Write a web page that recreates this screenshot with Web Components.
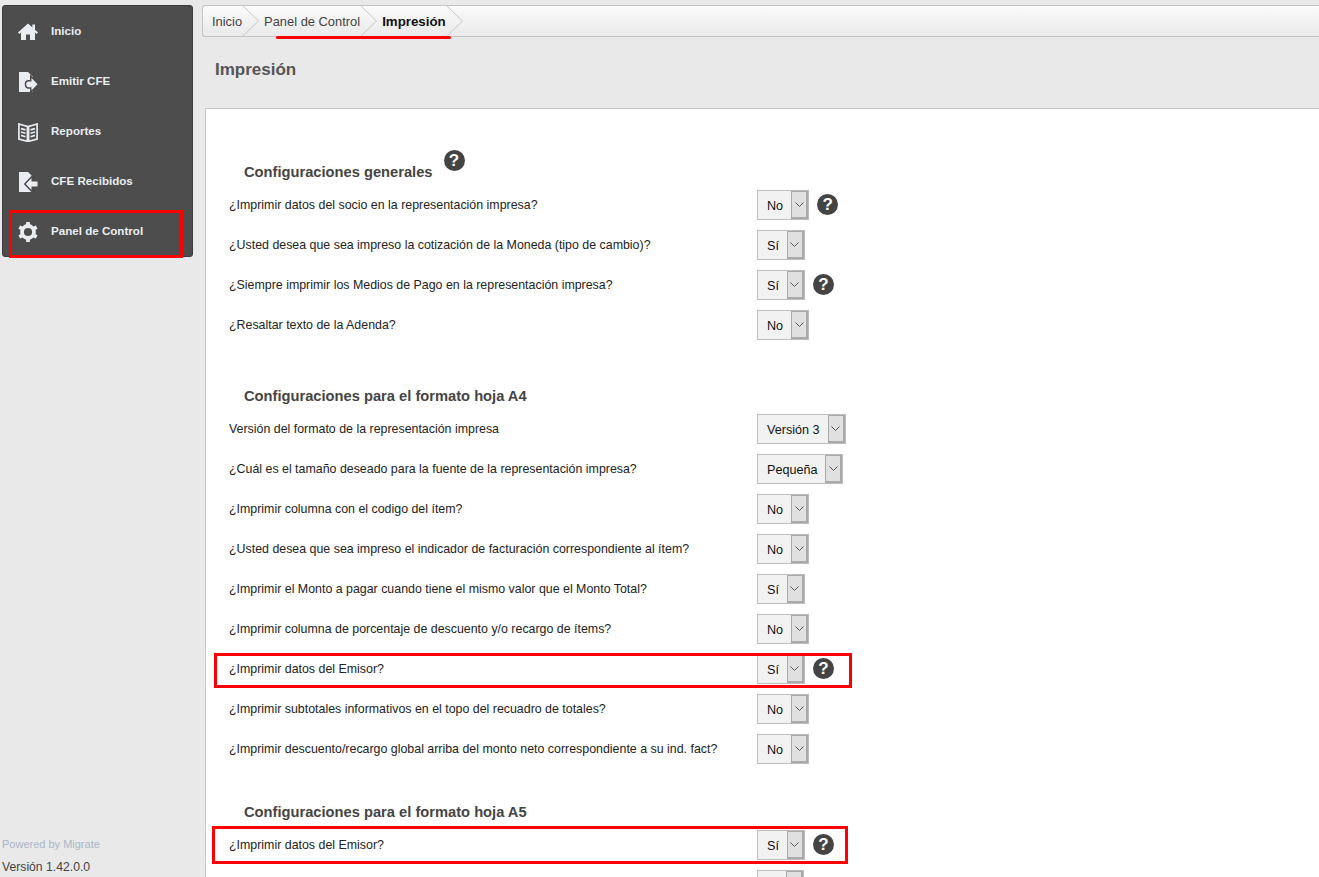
<!DOCTYPE html>
<html lang="es">
<head>
<meta charset="utf-8">
<title>Impresión</title>
<style>
  html, body { margin: 0; height: 100%; overflow: hidden; background: #e9e9e9; }
  body { font-family: "Liberation Sans", Arial, sans-serif; }
</style>
</head>
<body>
<app-shell>
  <side-nav slot="nav">
    <nav-item icon="home">Inicio</nav-item>
    <nav-item icon="send">Emitir CFE</nav-item>
    <nav-item icon="book">Reportes</nav-item>
    <nav-item icon="receive">CFE Recibidos</nav-item>
    <nav-item icon="gear" marked>Panel de Control</nav-item>
  </side-nav>
  <bread-crumbs slot="crumbs">
    <crumb-item>Inicio</crumb-item>
    <crumb-item>Panel de Control</crumb-item>
    <crumb-item current>Impresión</crumb-item>
  </bread-crumbs>

  <print-section heading="Configuraciones generales" help style="--top: 51px">
    <print-row label="¿Imprimir datos del socio en la representación impresa?" value="No" help></print-row>
    <print-row label="¿Usted desea que sea impreso la cotización de la Moneda (tipo de cambio)?" value="Sí"></print-row>
    <print-row label="¿Siempre imprimir los Medios de Pago en la representación impresa?" value="Sí" help></print-row>
    <print-row label="¿Resaltar texto de la Adenda?" value="No"></print-row>
  </print-section>

  <print-section heading="Configuraciones para el formato hoja A4" style="--top: 39px">
    <print-row label="Versión del formato de la representación impresa" value="Versión 3"></print-row>
    <print-row label="¿Cuál es el tamaño deseado para la fuente de la representación impresa?" value="Pequeña"></print-row>
    <print-row label="¿Imprimir columna con el codigo del ítem?" value="No"></print-row>
    <print-row label="¿Usted desea que sea impreso el indicador de facturación correspondiente al ítem?" value="No"></print-row>
    <print-row label="¿Imprimir el Monto a pagar cuando tiene el mismo valor que el Monto Total?" value="Sí"></print-row>
    <print-row label="¿Imprimir columna de porcentaje de descuento y/o recargo de ítems?" value="No"></print-row>
    <print-row label="¿Imprimir datos del Emisor?" value="Sí" help marked style="--mark-inset: 4px 467px 1px 8px"></print-row>
    <print-row label="¿Imprimir subtotales informativos en el topo del recuadro de totales?" value="No"></print-row>
    <print-row label="¿Imprimir descuento/recargo global arriba del monto neto correspondiente a su ind. fact?" value="No"></print-row>
  </print-section>

  <print-section heading="Configuraciones para el formato hoja A5" style="--top: 31px">
    <print-row label="¿Imprimir datos del Emisor?" value="Sí" help marked style="--mark-inset: 1px 471px 1px 6px"></print-row>
    <!-- next row is only cut in at the bottom of the window, its text is not visible -->
    <print-row label="" value="" style="--min-value: 11px"></print-row>
  </print-section>
</app-shell>

<script>
  const DOC = '<path d="M1 0h9l5 5v15H1z"/>';
  const ICONS = {
    home: '<path d="M10 1.5 0 10.6l1.3 1.3L3 10.4V18h5v-5.5h4V18h5v-7.6l1.7 1.5 1.3-1.3-3-2.8V2.5h-2.6v3.1z"/>',
    send: DOC + '<path class="cut" d="M13.5 6 19.5 12.3 13.5 18.5V15.2H10.5C9 15.2 8.2 14 8.2 12.3S9 9.4 10.5 9.4H13.5z"/>',
    book: '<g class="line"><path d="M.9 2 9.4 4.5V19.3L.9 17zM19.1 2 10.6 4.5V19.3L19.1 17z"/><path d="M3 6.6 7.5 7.9M3 10 7.5 11.3M3 13.4 7.5 14.7M17 6.6 12.5 7.9M17 10 12.5 11.3M17 13.4 12.5 14.7"/></g>',
    receive: DOC + '<path class="cut" d="M7.8 12 13.5 6V9.5H19.5V14.5H13.5V18z"/>',
    gear: '<g><circle class="ring" cx="10" cy="10" r="6"/>' +
      [0, 60, 120, 180, 240, 300].map((a) => `<rect x="8.1" y="0" width="3.8" height="4.5" rx=".6" transform="rotate(${a} 10 10)"/>`).join("") +
      "</g>"
  };

  // Page frame: sidebar on the left, breadcrumb, title and white content panel on the right
  class AppShell extends HTMLElement {
    constructor() {
      super();
      this.attachShadow({ mode: "open" });
      this.shadowRoot.innerHTML = `
        <style>
          :host { display: grid; grid-template-columns: 202px 1fr; height: 877px; overflow: hidden; color: #222; }
          aside { display: flex; flex-direction: column; justify-content: space-between; padding: 5px 0 0 2px; box-sizing: border-box; height: 877px; }
          .foot { line-height: 20px; color: #444; font-size: 12.2px; }
          .foot div:first-child { color: #a9b5c6; font-size: 11px; margin-bottom: 3px; }
          main { display: flex; flex-direction: column; padding-top: 5px; min-width: 0; }
          h1 { margin: 0; height: 71px; box-sizing: border-box; padding: 0 0 5px 13px; display: flex; align-items: center; font-size: 17px; color: #555; }
          .panel { margin-left: 3px; background: #fff; border-left: 1px solid #c8c8c8; border-top: 1px solid #c4c4c4; flex: 1; }
        </style>
        <aside>
          <slot name="nav"></slot>
          <div class="foot"><div>Powered by Migrate</div><div>Versión 1.42.0.0</div></div>
        </aside>
        <main>
          <slot name="crumbs"></slot>
          <h1>Impresión</h1>
          <div class="panel"><slot></slot></div>
        </main>`;
    }
  }

  class SideNav extends HTMLElement {
    constructor() {
      super();
      this.attachShadow({ mode: "open" });
      this.shadowRoot.innerHTML = `
        <style>
          :host { display: block; width: 191px; height: 252px; box-sizing: border-box; background: #4d4d4d; border: 1px solid #3c3c3c; border-radius: 3px; }
        </style>
        <slot></slot>`;
    }
  }

  class NavItem extends HTMLElement {
    constructor() {
      super();
      this.attachShadow({ mode: "open" });
    }

    connectedCallback() {
      const icon = ICONS[this.getAttribute("icon")] || "";
      this.shadowRoot.innerHTML = `
        <style>
          :host { display: flex; align-items: center; position: relative; height: 50px; padding-left: 15px; gap: 13px; font-size: 11.6px; font-weight: bold; color: #e9edf2; }
          span { margin-top: -2px; }
          svg { width: 20px; height: 20px; fill: #e9edf2; flex: none; margin-top: 2px; }
          .cut { stroke: #4d4d4d; stroke-width: 3; paint-order: stroke fill; }
          .line { fill: none; stroke: #e9edf2; stroke-width: 1.7; }
          .ring { fill: none; stroke: #e9edf2; stroke-width: 3.8; }
          :host([marked])::after { content: ""; position: absolute; left: 6px; right: 9px; top: 4px; bottom: -2px; border: 3px solid #f00; }
        </style>
        <svg viewBox="0 0 20 20">${icon}</svg>
        <span><slot></slot></span>`;
    }
  }

  class BreadCrumbs extends HTMLElement {
    constructor() {
      super();
      this.attachShadow({ mode: "open" });
      this.shadowRoot.innerHTML = `
        <style>
          :host { display: flex; position: relative; height: 32px; box-sizing: border-box; border: 1px solid #c4c4c4; border-right: 0; border-radius: 3px 0 0 3px; background: linear-gradient(#fbfbfb, #e9e9e9); padding-left: 9px; font-size: 12.9px; }
          :host::after { content: ""; position: absolute; left: 73px; width: 175px; top: 30px; height: 3px; background: #f00; border-radius: 2px; }
        </style>
        <slot></slot>`;
    }
  }

  class CrumbItem extends HTMLElement {
    constructor() {
      super();
      this.attachShadow({ mode: "open" });
      this.shadowRoot.innerHTML = `
        <style>
          :host { display: flex; align-items: center; color: #444; }
          :host([current]) { font-weight: bold; font-size: 13.3px; color: #111; }
          svg { width: 16px; height: 30px; margin-left: 1px; margin-right: 5px; fill: none; stroke: #c6c6c6; }
        </style>
        <span><slot></slot></span>
        <svg viewBox="0 0 16 30"><path d="M0 30 15.5 15 0 0"/></svg>`;
    }
  }

  class PrintSection extends HTMLElement {
    constructor() {
      super();
      this.attachShadow({ mode: "open" });
    }

    connectedCallback() {
      const badge = this.hasAttribute("help") ? "<help-badge></help-badge>" : "";
      this.shadowRoot.innerHTML = `
        <style>
          :host { display: block; margin-top: var(--top, 0); }
          h2 { display: flex; align-items: center; gap: 11px; height: 24px; margin: 0 0 1px; padding-left: 38px; font-size: 14.7px; color: #444; }
          help-badge { margin-bottom: 24px; }
        </style>
        <h2><span>${this.getAttribute("heading")}</span>${badge}</h2>
        <slot></slot>`;
    }
  }

  class PrintRow extends HTMLElement {
    constructor() {
      super();
      this.attachShadow({ mode: "open" });
    }

    connectedCallback() {
      const badge = this.hasAttribute("help") ? "<help-badge></help-badge>" : "";
      this.shadowRoot.innerHTML = `
        <style>
          :host { display: grid; grid-template-columns: 528px auto; align-items: center; position: relative; height: 40px; padding-left: 23px; font-size: 12.4px; }
          .field { display: flex; align-items: center; gap: 8px; }
          help-badge { margin-top: -2px; }
          :host([marked])::after { content: ""; position: absolute; inset: var(--mark-inset, 0); border: 3px solid #f00; pointer-events: none; }
        </style>
        <label>${this.getAttribute("label")}</label>
        <div class="field"><choice-select>${this.getAttribute("value")}</choice-select>${badge}</div>`;
    }
  }

  // Looks like the old styled select widgets: grey value box plus a darker arrow block
  class ChoiceSelect extends HTMLElement {
    constructor() {
      super();
      this.attachShadow({ mode: "open" });
      this.shadowRoot.innerHTML = `
        <style>
          :host { display: inline-flex; height: 30px; box-sizing: border-box; border: 1px solid #bdbdbd; background: #f2f2f2; font-size: 12.6px; color: #111; }
          .value { display: flex; align-items: center; padding: 2px 8px 0 9px; min-width: var(--min-value, 0); }
          .arrow { display: flex; align-items: center; justify-content: center; width: 14px; background: #e0e0e0; border: 1px solid #a9a9a9; border-width: 1px 2px 2px 1px; }
          svg { width: 9px; height: 5px; fill: none; stroke: #555; }
        </style>
        <span class="value"><slot></slot></span>
        <span class="arrow"><svg viewBox="0 0 9 5"><path d="M.5.5 4.5 4.5 8.5.5"/></svg></span>`;
    }
  }

  class HelpBadge extends HTMLElement {
    constructor() {
      super();
      this.attachShadow({ mode: "open" });
      this.shadowRoot.innerHTML = `
        <style>
          :host { display: inline-flex; align-items: center; justify-content: center; width: 21px; height: 21px; flex: none; border-radius: 50%; background: #444; color: #fff; font: bold 17px/21px "Liberation Sans", Arial, sans-serif; }
        </style>
        <span>?</span>`;
    }
  }

  customElements.define("app-shell", AppShell);
  customElements.define("side-nav", SideNav);
  customElements.define("nav-item", NavItem);
  customElements.define("bread-crumbs", BreadCrumbs);
  customElements.define("crumb-item", CrumbItem);
  customElements.define("print-section", PrintSection);
  customElements.define("print-row", PrintRow);
  customElements.define("choice-select", ChoiceSelect);
  customElements.define("help-badge", HelpBadge);
</script>
</body>
</html>
